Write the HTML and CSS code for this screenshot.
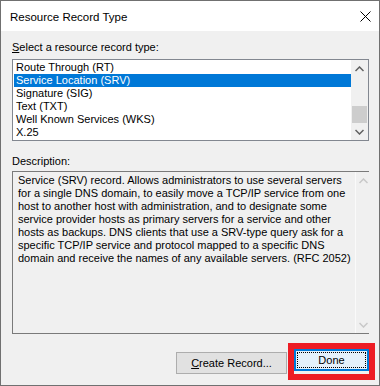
FILE: index.html
```html
<!DOCTYPE html>
<html>
<head>
<meta charset="utf-8">
<link rel="stylesheet" href="styles.css">
</head>
<body>
<div class="window">
  <div class="titlebar">
    <span class="title">Resource Record Type</span>
    <svg class="close" width="11" height="11" viewBox="0 0 11 11"><path d="M0.5 0.5L10.5 10.5M10.5 0.5L0.5 10.5" stroke="#000" stroke-width="1" fill="none"/></svg>
  </div>
  <div class="content">
    <div class="label"><u>S</u>elect a resource record type:</div>
    <div class="listbox">
      <ul class="items">
        <li>Route Through (RT)</li>
        <li class="selected">Service Location (SRV)</li>
        <li>Signature (SIG)</li>
        <li>Text (TXT)</li>
        <li>Well Known Services (WKS)</li>
        <li>X.25</li>
      </ul>
      <div class="scrollbar">
        <span class="arrow"><svg width="9" height="6" viewBox="0 0 9 6"><path d="M0.5 5L4.5 1L8.5 5" stroke="#606060" stroke-width="1.5" fill="none"/></svg></span>
        <div class="track"><div class="thumb"></div></div>
        <span class="arrow"><svg width="9" height="6" viewBox="0 0 9 6"><path d="M0.5 1L4.5 5L8.5 1" stroke="#606060" stroke-width="1.5" fill="none"/></svg></span>
      </div>
    </div>
    <div class="label desc-label">Description:</div>
    <div class="descbox">
      <div class="desctext">Service (SRV) record. Allows administrators to use several servers<br>for a single DNS domain, to easily move a TCP/IP service from one<br>host to another host with administration, and to designate some<br>service provider hosts as primary servers for a service and other<br>hosts as backups. DNS clients that use a SRV-type query ask for a<br>specific TCP/IP service and protocol mapped to a specific DNS<br>domain and receive the names of any available servers. (RFC 2052)</div>
      <div class="scrollbar disabled">
        <span class="arrow"><svg width="9" height="6" viewBox="0 0 9 6"><path d="M0.5 5L4.5 1L8.5 5" stroke="#c8c8c8" stroke-width="1.5" fill="none"/></svg></span>
        <div class="track"></div>
        <span class="arrow"><svg width="9" height="6" viewBox="0 0 9 6"><path d="M0.5 1L4.5 5L8.5 1" stroke="#c8c8c8" stroke-width="1.5" fill="none"/></svg></span>
      </div>
    </div>
    <div class="buttons">
      <button class="btn create"><u>C</u>reate Record...</button>
      <button class="btn done"><span class="focus">Done</span></button>
    </div>
  </div>
  <div class="highlight-box"></div>
</div>
</body>
</html>
```
FILE: styles.css
```css
html, body {
  margin: 0;
  padding: 0;
  width: 380px;
  height: 386px;
  overflow: hidden;
  font-family: "Liberation Sans", Arial, sans-serif;
  font-size: 11px;
  color: #000;
  background: #f0f0f0;
}

.window {
  position: relative;
  box-sizing: border-box;
  width: 380px;
  height: 386px;
  border: 1px solid #707070;
  background: #f0f0f0;
  display: flex;
  flex-direction: column;
}

.titlebar {
  height: 30px;
  flex: none;
  background: #fff;
  display: flex;
  align-items: center;
  justify-content: space-between;
  padding: 0 8px 0 9px;
}

.title {
  font-size: 11.5px;
  padding-top: 1px;
}

.close {
  display: block;
}

.content {
  flex: 1;
  display: flex;
  flex-direction: column;
  padding: 10px 10px 0 11px;
}

.label {
  line-height: 13px;
  height: 13px;
  margin-bottom: 5px;
}

.label u, .btn u {
  text-decoration: underline;
  text-underline-offset: 1px;
}

.listbox {
  box-sizing: border-box;
  height: 82px;
  border: 1px solid #828790;
  background: #fff;
  display: flex;
}

.items {
  list-style: none;
  margin: 0;
  padding: 1px 0 0 1px;
  flex: 1;
}

.items li {
  height: 13px;
  line-height: 13px;
  padding-left: 2px;
  white-space: nowrap;
}

.items li.selected {
  background: #0078d7;
  color: #fff;
}

.scrollbar {
  width: 17px;
  flex: none;
  background: #f0f0f0;
  display: flex;
  flex-direction: column;
}

.arrow {
  height: 17px;
  flex: none;
  display: flex;
  align-items: center;
  justify-content: center;
}

.track {
  flex: 1;
  display: flex;
  flex-direction: column;
  justify-content: flex-end;
}

.thumb {
  height: 17px;
  margin: 0 1px;
  background: #cdcdcd;
}

.desc-label {
  margin-top: 14px;
  margin-bottom: 3px;
}

.descbox {
  box-sizing: border-box;
  height: 163px;
  border: 1px solid #7a7a7a;
  background: #f0f0f0;
  display: flex;
}

.desctext {
  flex: 1;
  padding: 2px 4px 2px 5px;
  line-height: 13px;
  white-space: nowrap;
}

.scrollbar.disabled {
  border-left: 1px solid #fafafa;
  width: 16px;
}

.buttons {
  margin-top: 15px;
  display: flex;
  justify-content: flex-end;
  align-items: flex-start;
  gap: 7px;
}

.btn {
  font-family: "Liberation Sans", Arial, sans-serif;
  font-size: 11px;
  color: #000;
  box-sizing: border-box;
  height: 22px;
  margin: 0;
  padding: 0;
  line-height: 13px;
}

.create {
  width: 111px;
  margin-top: 3px;
  background: #e1e1e1;
  border: 1px solid #adadad;
}

.done {
  width: 75px;
  background: #e5f1fb;
  border: 2px solid #0078d7;
  padding: 1px;
  display: flex;
}

.done .focus {
  flex: 1;
  border: 1px dotted #000;
  display: flex;
  align-items: center;
  justify-content: center;
}

.highlight-box {
  position: absolute;
  left: 287px;
  top: 342px;
  width: 75px;
  height: 25px;
  border: 6px solid #ed1c24;
}
```
